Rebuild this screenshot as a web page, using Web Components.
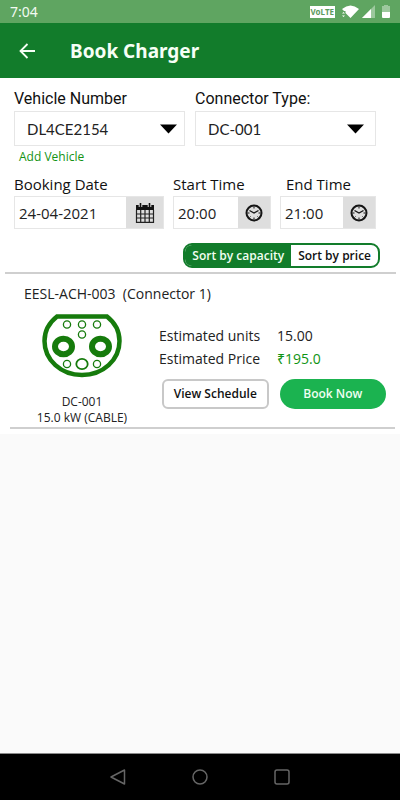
<!DOCTYPE html>
<html lang="en">
<head>
<meta charset="utf-8">
<meta name="viewport" content="width=device-width, initial-scale=1">
<title>Book Charger</title>
<style>
html, body { height: 100%; }
body { margin: 0; background: #fafafa; color: #1a1a1a; font: 15px/20px "Open Sans", "Noto Sans", sans-serif; }
</style>
</head>
<body>
<charger-app></charger-app>
<script>
const define = (name, html, setup) => {
  const template = document.createElement('template');
  template.innerHTML = html;
  customElements.define(name, class extends HTMLElement {
    constructor() {
      super();
      this.attachShadow({ mode: 'open' }).append(template.content.cloneNode(true));
    }
    connectedCallback() { if (setup) setup(this.shadowRoot, this); }
  });
};

define('status-bar', `
<style>
:host { display: flex; justify-content: space-between; align-items: center; height: 23px; padding: 0 10px; background: #5fa561; color: #f2faf2; font: 14px/20px "Noto Sans", sans-serif; }
.icons { display: flex; align-items: center; gap: 7px; }
.volte { display: block; padding: 0 1px; background: #fff; color: #5b9a5d; font-size: 8px; font-weight: 700; line-height: 12px; }
svg { display: block; }
.signal { margin-left: -4px; }
</style>
<span>7:04</span>
<div class="icons">
  <span class="volte">VoLTE</span>
  <svg width="17" height="14" viewBox="0 0 17 14"><path d="M0 4Q8.500-3 17 4L8.500 13L3.500 8V6H2Z" fill="#fff"/><path d="M0 8.500L1.500 7L3 8.500ZM0 10.500L1.500 12L3 10.500Z" fill="#fff"/></svg>
  <svg class="signal" width="13" height="13" viewBox="0 0 13 13"><path d="M13 0V13H0Z" fill="#9cc89d"/><path d="M9 4V13H0Z" fill="#fff"/></svg>
  <svg width="8" height="13" viewBox="0 0 8 13"><path d="M2 0h4v1h2v6H0V1h2Z" fill="#9cc89d"/><path d="M0 7h8v5q0 1-1 1H1q-1 0-1-1Z" fill="#fff"/></svg>
</div>`);

define('app-header', `
<style>
:host { display: flex; align-items: center; gap: 33px; height: 55px; padding: 0 18px; background: #127c2b; color: #f6fff6; }
button { border: 0; padding: 0; background: none; color: inherit; display: block; }
svg { display: block; }
h1 { margin: 0; font: 700 19px/28px "Noto Sans", sans-serif; }
</style>
<button aria-label="Back"><svg width="19" height="18" viewBox="0 0 19 18" fill="none" stroke="currentColor" stroke-width="1.800"><path d="M17 9H3M9.500 2L2.500 9l7 7"/></svg></button>
<h1><slot></slot></h1>`);

define('select-field', `
<style>
:host { display: block; min-width: 0; }
label { display: block; font: 16px/24px Roboto, sans-serif; color: #111; }
.box { display: grid; height: 35px; box-sizing: border-box; border: 1px solid #e6e6e6; background: #fff; }
select { grid-area: 1/1; appearance: none; width: 100%; height: 100%; border: 0; padding: 0 32px 0 12px; margin: 0; background: none; color: #222; font: 15px/20px Lato, sans-serif; }
svg { grid-area: 1/1; place-self: center end; margin-right: var(--arrow-inset, 7px); pointer-events: none; }
</style>
<label for="choice"></label>
<div class="box"><select id="choice"><option></option></select>
<svg width="17" height="10" viewBox="0 0 17 10"><path d="M0 0.500H17L8.500 9.500Z" fill="#000"/></svg></div>`,
(root, host) => {
  root.querySelector('label').textContent = host.getAttribute('label');
  root.querySelector('option').textContent = host.getAttribute('value');
});

define('picker-field', `
<style>
:host { display: block; min-width: 0; }
label { display: block; padding-left: var(--label-inset, 0); font: 15px/24px "Open Sans", sans-serif; color: #111; white-space: nowrap; }
.box { display: flex; height: 33px; box-sizing: border-box; border: 1px solid #e6e6e6; background: #fff; }
input { flex: 1; min-width: 0; width: 0; border: 0; padding: 0 0 0 4px; background: none; color: #222; font: 15px/20px "Open Sans", sans-serif; }
button { display: grid; place-items: center; flex: none; width: var(--button-width, 32px); border: 0; padding: 0; background: #dedede; }
</style>
<label for="value"></label>
<div class="box"><input id="value"><button></button></div>`,
(root, host) => {
  const icons = {
    calendar: `<svg width="20" height="22" viewBox="0 0 20 22"><path d="M1 3h18v5H1Z" fill="#111"/><path d="M1.500 8v12.300h17V8M1.500 12h17M1.500 16h17M5.700 8v12M10 8v12M14.300 8v12" fill="none" stroke="#222" stroke-width="1.200"/><path d="M5.500 1v4M14.500 1v4" stroke="#dedede" stroke-width="3.600"/><path d="M5.500 1v4M14.500 1v4" stroke="#111" stroke-width="1.600"/></svg>`,
    clock: `<svg width="18" height="18" viewBox="0 0 18 18" fill="none" stroke="#151515"><circle cx="9" cy="9" r="7.500" stroke-width="2"/><path d="M4.500 6.500L9 9l4.500-2.500" stroke-width="1.400"/><path d="M9 2.500v2M9 13.500v2M2.500 9h2M13.500 9h2M4.500 13.500l1-1M13.500 13.500l-1-1" stroke-width="1"/></svg>`
  };
  const button = root.querySelector('button');
  root.querySelector('label').textContent = host.getAttribute('label');
  root.querySelector('input').value = host.getAttribute('value');
  button.innerHTML = icons[host.getAttribute('icon')];
  button.setAttribute('aria-label', 'Choose ' + host.getAttribute('label'));
});

define('sort-toggle', `
<style>
:host { display: flex; width: fit-content; height: 25px; box-sizing: border-box; border: 2px solid #127c2b; border-radius: 9px; overflow: hidden; background: #fff; }
button { border: 0; margin: 0; padding: 0 7px; background: none; color: #111; font: 600 12px/20px "Open Sans", sans-serif; white-space: nowrap; }
button[aria-pressed=true] { background: #127c2b; color: #f2fff2; }
</style>
<button aria-pressed="true">Sort by capacity</button><button aria-pressed="false">Sort by price</button>`);

define('connector-icon', `
<style>:host { display: block; } svg { display: block; }</style>
<svg width="80" height="64" viewBox="0 0 80 64" fill="none" stroke="#167b0c">
<path d="M15 2.500H65C72 8 77.500 17 77.500 27C77.500 46 61 61 40 61S2.500 46 2.500 27C2.500 17 8 8 15 2.500Z" stroke-width="4.500"/>
<g stroke-width="1.300"><circle cx="25" cy="10.500" r="3.600"/><circle cx="40" cy="10.500" r="3.600"/><circle cx="55" cy="10.500" r="3.600"/><circle cx="40" cy="20.500" r="3.600"/><circle cx="25" cy="50" r="3.600"/><circle cx="55" cy="50" r="3.600"/></g>
<ellipse cx="40" cy="50" rx="5.700" ry="5.200" stroke-width="1.800"/>
<ellipse cx="21.500" cy="32.500" rx="8.500" ry="7.800" stroke-width="6"/><ellipse cx="58.500" cy="32.500" rx="8.500" ry="7.800" stroke-width="6"/>
</svg>`);

define('charger-card', `
<style>
:host { display: block; padding: 10px 14px 0 24px; }
h2 { margin: 0; font: 14px/20px "Open Sans", sans-serif; color: #222; white-space: pre; }
.body { display: grid; grid-template-columns: 116px 1fr; gap: 19px; padding-top: 10px; }
.plug { display: flex; flex-direction: column; align-items: center; text-align: center; font-size: 12px; line-height: 16px; color: #222; }
.plug p { margin: 16px 0 1px; white-space: nowrap; }
dl { display: grid; grid-template-columns: 118px 1fr; margin: 10px 0 9px; font-size: 14px; line-height: 23px; color: #222; }
dd { margin: 0; }
.price { color: #0f9414; }
.actions { display: grid; grid-template-columns: 1fr 1fr; gap: 11px; padding-left: 3px; }
button { height: 30px; padding: 0; border-radius: 15px; border: 0; background: #1bb350; color: #effff2; font: 600 12px/20px "Open Sans", sans-serif; white-space: nowrap; }
.outline { border: 2px solid #c8c8c8; border-radius: 6px; background: #fff; color: #111; }
</style>
<h2>EESL-ACH-003  (Connector 1)</h2>
<div class="body">
  <div class="plug"><connector-icon></connector-icon><p>DC-001<br>15.0 kW (CABLE)</p></div>
  <div>
    <dl><dt>Estimated units</dt><dd>15.00</dd><dt>Estimated Price</dt><dd class="price">₹195.0</dd></dl>
    <div class="actions"><button class="outline">View Schedule</button><button>Book Now</button></div>
  </div>
</div>`);

define('system-nav', `
<style>
:host { display: flex; justify-content: center; align-items: center; gap: 66px; height: 46px; border-top: 1px solid #8a8a8a; background: #000; }
button { border: 0; padding: 0; background: none; }
svg { display: block; }
</style>
<button aria-label="Back"><svg width="16" height="16" viewBox="0 0 16 16" fill="none" stroke="#666" stroke-width="1.500" stroke-linejoin="round"><path d="M14.500 1V15L1 8Z"/></svg></button>
<button aria-label="Home"><svg width="16" height="16" viewBox="0 0 16 16" fill="none" stroke="#666" stroke-width="1.500"><circle cx="8" cy="8" r="7"/></svg></button>
<button aria-label="Recent apps"><svg width="16" height="16" viewBox="0 0 16 16" fill="none" stroke="#666" stroke-width="1.500"><rect x="1" y="1" width="14" height="14" rx="2"/></svg></button>`);

define('charger-app', `
<style>
:host { display: flex; flex-direction: column; min-height: 100vh; }
main { background: #fff; padding-bottom: 5px; }
form { padding: 9px 24px 0 14px; }
.row { display: grid; }
.vehicle { grid-template-columns: 171fr 181fr; gap: 10px; }
.times { grid-template-columns: 150fr 98fr 96fr; gap: 9px; }
.vehicle > :last-child { --arrow-inset: 11px; }
.times > :first-child { --button-width: 37px; }
.times > :last-child { --label-inset: 6px; }
a { display: block; width: fit-content; margin: 0 0 3px 5px; padding: 0 0 2px; color: #149314; font: 12px/21px "Open Sans", sans-serif; text-decoration: none; }
.sort { display: flex; justify-content: flex-end; padding: 14px 20px 4px; }
hr { border: 0; height: 2px; margin: 0 4px 0 5px; background: #cfcfcf; }
hr.end { margin-left: 10px; margin-right: 5px; }
system-nav { margin-top: auto; }
</style>
<status-bar></status-bar>
<app-header>Book Charger</app-header>
<main>
  <form>
    <div class="row vehicle">
      <select-field label="Vehicle Number" value="DL4CE2154"></select-field>
      <select-field label="Connector Type:" value="DC-001"></select-field>
    </div>
    <a href="#vehicle">Add Vehicle</a>
    <div class="row times">
      <picker-field label="Booking Date" value="24-04-2021" icon="calendar"></picker-field>
      <picker-field label="Start Time" value="20:00" icon="clock"></picker-field>
      <picker-field label="End Time" value="21:00" icon="clock"></picker-field>
    </div>
  </form>
  <div class="sort"><sort-toggle></sort-toggle></div>
  <hr>
  <charger-card></charger-card>
  <hr class="end">
</main>
<system-nav></system-nav>`);
</script>
</body>
</html>
